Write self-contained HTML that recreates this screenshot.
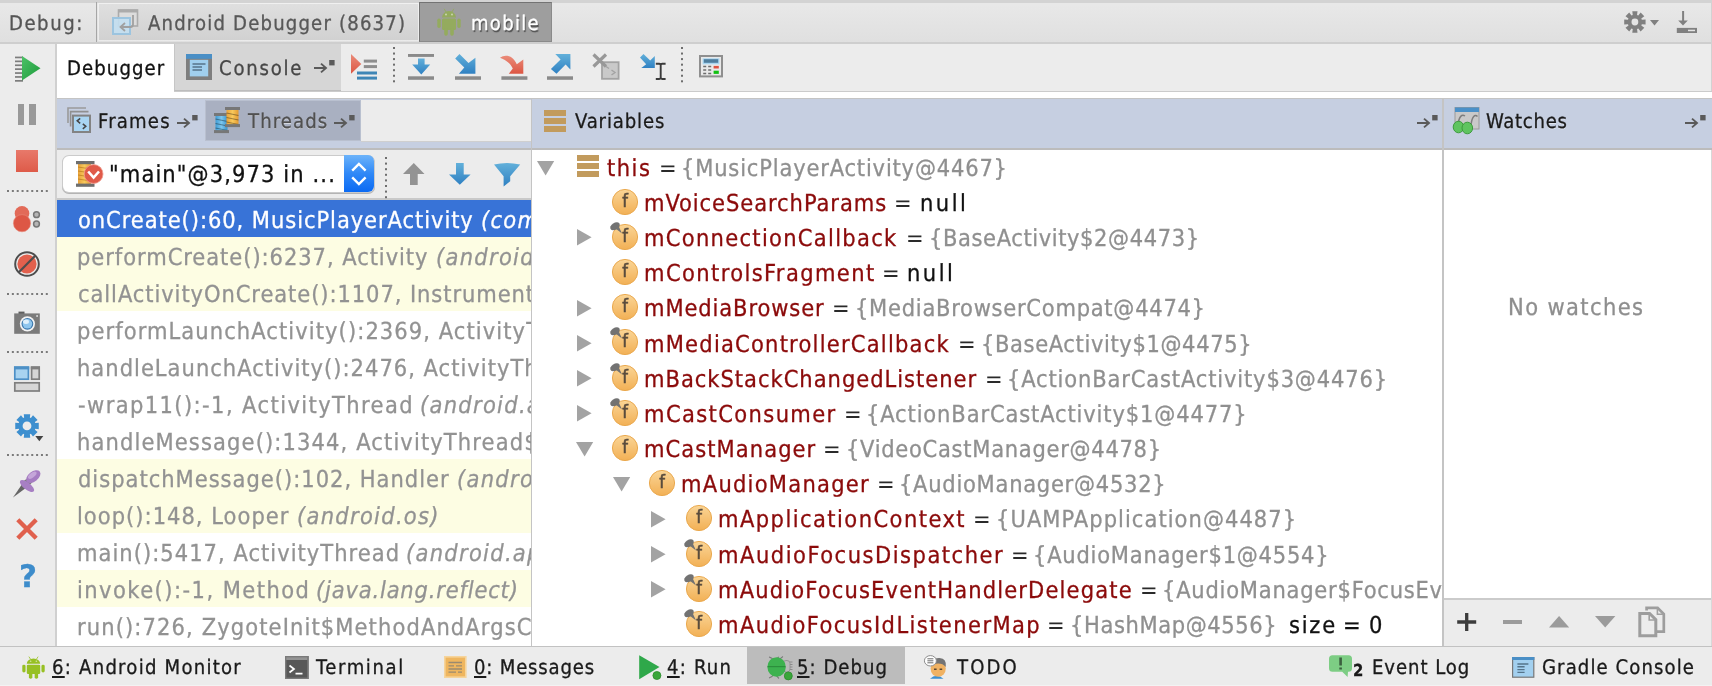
<!DOCTYPE html>
<html><head><meta charset="utf-8"><title>Debug</title>
<style>
html,body{margin:0;padding:0}
body{width:1712px;height:686px;position:relative;overflow:hidden;background:#ececec;font-family:'DejaVu Sans Condensed','DejaVu Sans','Liberation Sans',sans-serif;font-stretch:condensed}
body div,body span.t,body svg{position:absolute}
svg{overflow:visible;will-change:transform}
span.t{white-space:pre;line-height:1;font-stretch:condensed;will-change:transform;text-rendering:geometricPrecision;-webkit-text-stroke:0.3px}
.clip{overflow:hidden}
i{font-style:italic}
</style></head><body>
<svg width="0" height="0" style="left:0;top:0"><defs>
<linearGradient id="gb" x1="0" y1="0" x2="0" y2="1"><stop offset="0" stop-color="#62b0da"/><stop offset="1" stop-color="#2f80c2"/></linearGradient>
<linearGradient id="gr" x1="0" y1="0" x2="0" y2="1"><stop offset="0" stop-color="#ea8b79"/><stop offset="1" stop-color="#dc5643"/></linearGradient>
<linearGradient id="gg" x1="0" y1="0" x2="1" y2="1"><stop offset="0" stop-color="#4cc267"/><stop offset="1" stop-color="#1d9a3a"/></linearGradient>
<linearGradient id="gf" x1="0" y1="0" x2="0" y2="1"><stop offset="0" stop-color="#fad596"/><stop offset="1" stop-color="#f2b055"/></linearGradient>
<linearGradient id="go" x1="0" y1="0" x2="1" y2="0"><stop offset="0" stop-color="#e9a23a"/><stop offset="0.5" stop-color="#f8c95c"/><stop offset="1" stop-color="#e39a32"/></linearGradient>
<linearGradient id="gbl" x1="0" y1="0" x2="1" y2="0"><stop offset="0" stop-color="#3f9bd3"/><stop offset="0.5" stop-color="#7cc6ee"/><stop offset="1" stop-color="#3a93cc"/></linearGradient>
</defs></svg>

<div style="left:0px;top:0px;width:1712px;height:44px;background:linear-gradient(#e9e9e9,#dfdfdf);"></div>
<div style="left:0px;top:0px;width:1712px;height:3px;background:#d3d3d3;"></div>
<div style="left:0px;top:42.2px;width:1712px;height:1.8px;background:#cecece;"></div>
<span class="t" style="left:9.29px;top:13.20px;font-size:20.1px;letter-spacing:1.538px;color:#555;">Debug:</span>
<div style="left:95.6px;top:2.2px;width:1.3px;height:39.7px;background:#a6a6a6;"></div>
<div style="left:99px;top:3.6px;width:318.5px;height:36.1px;background:linear-gradient(#dfdfdf,#d1d1d1);box-shadow:0 0 0 1px rgba(255,255,255,.35)"></div>
<svg style="left:112px;top:9px;" width="27" height="26" viewBox="0 0 27 26" ><rect x="6.5" y="1" width="19" height="16" fill="#dcdcdc" stroke="#ababab" stroke-width="1.6"/><rect x="6.5" y="0.5" width="19" height="3" fill="#ababab"/><rect x="1" y="9" width="17" height="16" fill="#c3dff1" fill-opacity="0.9" stroke="#9cc4df" stroke-width="2"/><path d="M21 6 V15.5 Q21 18 18.5 18 H9.5 M13 14 L8.5 18 L13 22" fill="none" stroke="#a0a0a0" stroke-width="1.8"/></svg>
<span class="t" style="left:148.00px;top:13.20px;font-size:20.1px;letter-spacing:1.185px;color:#585858;">Android Debugger (8637)</span>
<div style="left:419.3px;top:1.9px;width:133.2px;height:39.7px;background:#9e9e9e;border:1.5px solid #737373;border-right-color:#8a8a8a;border-bottom-color:#8a8a8a;box-sizing:border-box"></div>
<svg style="left:436.9px;top:8.2px;" width="24.0" height="28.0" viewBox="0 0 24 28" preserveAspectRatio="none"><g fill="#94ab5e"><path d="M5 9.5 A7 6.5 0 0 1 19 9.5 Z"/><rect x="5" y="10.5" width="14" height="11.5" rx="1.5"/><rect x="0.3" y="10.5" width="3.4" height="9.5" rx="1.7"/><rect x="20.3" y="10.5" width="3.4" height="9.5" rx="1.7"/><rect x="7.2" y="20" width="3.6" height="7.7" rx="1.7"/><rect x="13.2" y="20" width="3.6" height="7.7" rx="1.7"/></g><path d="M7.2 0.8 L9 4 M16.8 0.8 L15 4" stroke="#94ab5e" stroke-width="0.9" fill="none"/><circle cx="9" cy="6.5" r="0.9" fill="#fff" fill-opacity="0.55"/><circle cx="15" cy="6.5" r="0.9" fill="#fff" fill-opacity="0.55"/></svg>
<span class="t" style="left:470.79px;top:13.20px;font-size:20.1px;letter-spacing:1.261px;color:#fff;text-shadow:1px 1.5px 1px #4c4c4c">mobile</span>
<svg style="left:1620px;top:8px;" width="42" height="30" viewBox="0 0 42 30" ><path d="M12.29 3.32 L17.51 3.32 L17.05 7.06 L18.29 7.58 L20.61 4.60 L24.30 8.29 L21.32 10.61 L21.84 11.85 L25.58 11.39 L25.58 16.61 L21.84 16.15 L21.32 17.39 L24.30 19.71 L20.61 23.40 L18.29 20.42 L17.05 20.94 L17.51 24.68 L12.29 24.68 L12.75 20.94 L11.51 20.42 L9.19 23.40 L5.50 19.71 L8.48 17.39 L7.96 16.15 L4.22 16.61 L4.22 11.39 L7.96 11.85 L8.48 10.61 L5.50 8.29 L9.19 4.60 L11.51 7.58 L12.75 7.06 Z M18.30 14.00 A3.4 3.4 0 1 0 11.50 14.00 A3.4 3.4 0 1 0 18.30 14.00 Z" fill="#808080" fill-rule="evenodd"/><path d="M30 12 H39 L34.5 17.5 Z" fill="#808080"/></svg>
<svg style="left:1675px;top:10px;" width="24" height="24" viewBox="0 0 24 24" ><rect x="7.1" y="1" width="2" height="10" fill="#808080"/><path d="M3.2 10.4 H12.8 L8 15.6 Z" fill="#808080"/><rect x="1.8" y="17.9" width="20.2" height="5.1" fill="#808080"/><rect x="13" y="19.7" width="7" height="1.5" fill="#e4e4e4"/></svg>
<div style="left:0px;top:44px;width:1712px;height:48px;background:#ececec;"></div>
<div style="left:1710.8px;top:3px;width:1.2px;height:95px;background:#d2d2d2;"></div>
<div style="left:56.5px;top:44px;width:117px;height:54px;background:#fff;"></div>
<span class="t" style="left:67.09px;top:57.70px;font-size:20.1px;letter-spacing:1.109px;color:#111;">Debugger</span>
<div style="left:173.5px;top:44px;width:167.5px;height:47.3px;background:#d6d6d6;border-left:1px solid #c6c6c6;border-bottom:1px solid #bdbdbd;box-sizing:border-box"></div>
<svg style="left:186.2px;top:53.7px;" width="26" height="26" viewBox="0 0 26 26" ><rect x="0" y="0" width="26" height="26" fill="#7e7e7e"/><rect x="0" y="0" width="26" height="4.8" fill="#4a8fc6"/><rect x="3.8" y="5.8" width="18.4" height="16.599999999999998" fill="#a0cfee"/><path d="M6.5 10 H19.5 M6.5 13 H16 M6.5 16 H16" stroke="#56748a" stroke-width="1.5"/></svg>
<span class="t" style="left:219.00px;top:57.70px;font-size:20.1px;letter-spacing:1.775px;color:#474747;">Console</span>
<svg style="left:313.7px;top:59px;" width="22" height="16" viewBox="0 0 22 16" ><path d="M0 9 H11.5 M7 4.6 L12 9 L7 13.4" fill="none" stroke="#5a5a5a" stroke-width="1.9"/><rect x="15.2" y="1" width="5.4" height="5.4" fill="#5a5a5a"/></svg>
<div style="left:173.5px;top:91px;width:1538.5px;height:1.6px;background:#cbcbcb;"></div>
<div style="left:56.5px;top:92.4px;width:1655.5px;height:5.6px;background:#fff;"></div>
<svg style="left:351px;top:54px;" width="27" height="26" viewBox="0 0 27 26" ><path d="M0 0 L10.3 10 L0 19.8 Z" fill="url(#gr)"/><rect x="12.8" y="5.6" width="13.2" height="3" fill="#8e8e8e"/><rect x="12.8" y="11.1" width="13.2" height="3" fill="#8e8e8e"/><rect x="6" y="17.5" width="20" height="3" fill="#3f86b6"/><rect x="6" y="22.6" width="20" height="3" fill="#3f86b6"/></svg>
<svg style="left:392.5px;top:47px;" width="2" height="36" viewBox="0 0 2 36" ><rect x="0" y="0.00" width="2" height="2" fill="#6e6e6e"/><rect x="0" y="5.55" width="2" height="2" fill="#6e6e6e"/><rect x="0" y="11.10" width="2" height="2" fill="#6e6e6e"/><rect x="0" y="16.65" width="2" height="2" fill="#6e6e6e"/><rect x="0" y="22.20" width="2" height="2" fill="#6e6e6e"/><rect x="0" y="27.75" width="2" height="2" fill="#6e6e6e"/><rect x="0" y="33.30" width="2" height="2" fill="#6e6e6e"/></svg>
<svg style="left:408px;top:54px;" width="26" height="26" viewBox="0 0 26 26" ><rect x="0" y="0" width="26" height="2.9" fill="#8a8a8a"/><rect x="0" y="22.3" width="26" height="3.5" fill="#8a8a8a"/><path d="M10 4.5 H16.6 V10.5 H22.2 L13.3 20.5 L4.2 10.5 H10 Z" fill="url(#gb)"/></svg>
<svg style="left:454.5px;top:54px;" width="26" height="26" viewBox="0 0 26 26" ><rect x="0" y="22.3" width="26" height="3.5" fill="#8a8a8a"/><path d="M4.5 0 L13.5 9 L20.4 3.8 V19.8 H3.9 L9.3 13.6 L0.2 4.4 Z" fill="url(#gb)"/></svg>
<svg style="left:499.5px;top:54px;" width="28" height="26" viewBox="0 0 28 26" ><rect x="1.4" y="22.3" width="26" height="3.5" fill="#8a8a8a"/><path d="M0 3.8 C5 0 13 1.2 16.8 10.2 L23.3 5.6 V19.8 H8.8 L12.8 14.6 C10.5 9.5 6.5 6.2 0 3.8 Z" fill="url(#gr)"/></svg>
<svg style="left:547px;top:54px;" width="26" height="26" viewBox="0 0 26 26" ><rect x="0" y="22.3" width="26" height="3.5" fill="#8a8a8a"/><path d="M8.3 0 H23.4 V15.6 L18.6 10.5 L9.5 19.8 L3.9 15 L13.6 5.6 Z" fill="url(#gb)"/></svg>
<svg style="left:592px;top:53px;" width="28" height="27" viewBox="0 0 28 27" ><rect x="10" y="9.2" width="16.6" height="16.6" fill="#c9c9c9" stroke="#a3a3a3" stroke-width="1.8"/><path d="M14 13.5 l3 2 M19.5 17 l3.5 2.5 l-3.5 2.5" stroke="#a3a3a3" stroke-width="1.4" fill="none"/><path d="M1.5 1.5 L14 13.5 M14 1.5 L1.5 13.5" stroke="#989898" stroke-width="3.2"/></svg>
<svg style="left:640px;top:54px;" width="27" height="26" viewBox="0 0 27 26" ><path d="M3.5 0 L10.2 6.6 L14.8 2 V14 H1.3 L6.2 10.2 L0 3.6 Z" fill="url(#gb)"/><path d="M15.8 9.7 H19.3 Q20.7 9.7 20.7 11 Q20.7 9.7 22.2 9.7 H25.6 M15.8 25 H19.3 Q20.7 25 20.7 23.6 Q20.7 25 22.2 25 H25.6 M20.7 10.5 V24.2" stroke="#3b3b3b" stroke-width="1.9" fill="none"/></svg>
<svg style="left:681.2px;top:47px;" width="2" height="36" viewBox="0 0 2 36" ><rect x="0" y="0.00" width="2" height="2" fill="#6e6e6e"/><rect x="0" y="5.55" width="2" height="2" fill="#6e6e6e"/><rect x="0" y="11.10" width="2" height="2" fill="#6e6e6e"/><rect x="0" y="16.65" width="2" height="2" fill="#6e6e6e"/><rect x="0" y="22.20" width="2" height="2" fill="#6e6e6e"/><rect x="0" y="27.75" width="2" height="2" fill="#6e6e6e"/><rect x="0" y="33.30" width="2" height="2" fill="#6e6e6e"/></svg>
<svg style="left:699px;top:54.9px;" width="24" height="22.4" viewBox="0 0 24 22.4" ><rect x="1" y="1" width="22" height="20.4" fill="#e9e9e9" stroke="#8f8f8f" stroke-width="2"/><rect x="3.6" y="3.3" width="16.8" height="6" fill="#a9d6f1"/><rect x="4.8" y="4.2" width="14.4" height="3.6" fill="#4f7e9e"/><path d="M4.2 11.5 H7.2 M9.2 11.5 H12.2 M4.2 15 H7.2 M9.2 15 H12.2 M4.2 18.5 H7.2 M9.2 18.5 H12.2" stroke="#6d6d6d" stroke-width="1.6"/><rect x="14.6" y="10.9" width="5.2" height="2.6" fill="#df5140"/><rect x="14.6" y="15.7" width="5.2" height="3.2" fill="#12c112"/></svg>
<div style="left:56.5px;top:98px;width:1655.5px;height:1.4px;background:#c4c4c4;"></div>
<div style="left:56.5px;top:99.4px;width:1655.5px;height:48.6px;background:#c6cfe1;"></div>
<div style="left:361px;top:100.2px;width:169.5px;height:40.4px;background:#ececec;border-bottom:1px solid #cfcfcf"></div>
<div style="left:204.5px;top:100.2px;width:156px;height:40.4px;background:#a9b0c1;border:1px solid #b9c0cf;box-sizing:border-box"></div>
<div style="left:56.5px;top:148px;width:1655.5px;height:1.6px;background:#bcbcbc;"></div>
<svg style="left:67px;top:107px;" width="24" height="26" viewBox="0 0 24 26" ><path d="M1 16 V1 H19" fill="none" stroke="#9a9a9a" stroke-width="1.6"/><path d="M3.6 19.5 V4.6 H21.5" fill="none" stroke="#909090" stroke-width="1.6"/><rect x="6" y="8.6" width="17" height="16.4" fill="#a9d5f2" stroke="#838383" stroke-width="2"/><path d="M13.2 11.3 L10.2 13.8 L13.2 16.3 M15.8 16.8 L18.8 19.3 L15.8 21.8" fill="none" stroke="#454545" stroke-width="1.5"/></svg>
<span class="t" style="left:98.29px;top:110.80px;font-size:20.1px;letter-spacing:1.197px;color:#1a1a1a;text-shadow:0 1px 0 rgba(255,255,255,.45)">Frames</span>
<svg style="left:177px;top:113.8px;" width="22" height="16" viewBox="0 0 22 16" ><path d="M0 9 H11.5 M7 4.6 L12 9 L7 13.4" fill="none" stroke="#5a5a5a" stroke-width="1.9"/><rect x="15.2" y="1" width="5.4" height="5.4" fill="#5a5a5a"/></svg>
<svg style="left:214px;top:107px;" width="27" height="27" viewBox="0 0 27 27" ><rect x="1.5" y="8" width="12" height="16.1" fill="url(#gbl)"/><path d="M1.5 12 l12 2.5 M1.5 16.5 l12 2.5 M1.5 21 l12 2.5" stroke="#000" stroke-opacity="0.35" stroke-width="1.2"/><rect x="0" y="6" width="15" height="3" fill="#777"/><rect x="0" y="23.1" width="15" height="3" fill="#777"/><rect x="12.5" y="2" width="12" height="16.1" fill="url(#go)"/><path d="M12.5 6 l12 2.5 M12.5 10.5 l12 2.5 M12.5 15 l12 2.5" stroke="#000" stroke-opacity="0.35" stroke-width="1.2"/><rect x="11" y="0" width="15" height="3" fill="#777"/><rect x="11" y="17.1" width="15" height="3" fill="#777"/></svg>
<span class="t" style="left:247.60px;top:110.80px;font-size:20.1px;letter-spacing:1.107px;color:#505050;text-shadow:0 1px 0 rgba(255,255,255,.5)">Threads</span>
<svg style="left:334.3px;top:113.8px;" width="22" height="16" viewBox="0 0 22 16" ><path d="M0 9 H11.5 M7 4.6 L12 9 L7 13.4" fill="none" stroke="#5a5a5a" stroke-width="1.9"/><rect x="15.2" y="1" width="5.4" height="5.4" fill="#5a5a5a"/></svg>
<div style="left:543.5px;top:109.5px;width:22px;height:6px;background:#c29b5d;"></div>
<div style="left:543.5px;top:117.5px;width:22px;height:6px;background:#c29b5d;"></div>
<div style="left:543.5px;top:125.5px;width:22px;height:6px;background:#c29b5d;"></div>
<span class="t" style="left:575.00px;top:110.80px;font-size:20.1px;letter-spacing:0.862px;color:#1a1a1a;text-shadow:0 1px 0 rgba(255,255,255,.45)">Variables</span>
<svg style="left:1416.5px;top:113.8px;" width="22" height="16" viewBox="0 0 22 16" ><path d="M0 9 H11.5 M7 4.6 L12 9 L7 13.4" fill="none" stroke="#5a5a5a" stroke-width="1.9"/><rect x="15.2" y="1" width="5.4" height="5.4" fill="#5a5a5a"/></svg>
<svg style="left:1453px;top:107px;" width="27" height="27" viewBox="0 0 27 27" ><rect x="2" y="0.5" width="24" height="21.5" fill="#c9c9c9" stroke="#9a9a9a" stroke-width="1"/><rect x="2" y="0.5" width="24" height="4.5" fill="#4a90c8"/><path d="M5 18 C6 9 9 7 12 9 M18 18 C19 9 22 7 24.5 9.5" fill="none" stroke="#7d7d7d" stroke-width="1.5"/><ellipse cx="5.5" cy="20" rx="5.3" ry="5.8" fill="#5fc45f" stroke="#3c9a3c" stroke-width="1"/><ellipse cx="14.3" cy="21" rx="5.3" ry="5.8" fill="#5fc45f" stroke="#3c9a3c" stroke-width="1"/></svg>
<span class="t" style="left:1486.40px;top:110.80px;font-size:20.1px;letter-spacing:0.704px;color:#1a1a1a;text-shadow:0 1px 0 rgba(255,255,255,.45)">Watches</span>
<svg style="left:1684.5px;top:113.8px;" width="22" height="16" viewBox="0 0 22 16" ><path d="M0 9 H11.5 M7 4.6 L12 9 L7 13.4" fill="none" stroke="#5a5a5a" stroke-width="1.9"/><rect x="15.2" y="1" width="5.4" height="5.4" fill="#5a5a5a"/></svg>
<div style="left:0px;top:44px;width:55px;height:602px;background:#ececec;"></div>
<div style="left:55px;top:44px;width:1.5px;height:602px;background:#d0d0d0;"></div>
<svg style="left:14px;top:56px;" width="28" height="25" viewBox="0 0 28 25" ><rect x="1" y="0.6" width="8" height="1.7" fill="#7d7d7d"/><rect x="1" y="4.5" width="8" height="1.7" fill="#7d7d7d"/><rect x="1" y="8.4" width="8" height="1.7" fill="#7d7d7d"/><rect x="1" y="12.3" width="8" height="1.7" fill="#7d7d7d"/><rect x="1" y="16.2" width="8" height="1.7" fill="#7d7d7d"/><rect x="1" y="20.1" width="8" height="1.7" fill="#7d7d7d"/><rect x="1" y="24.0" width="8" height="1.7" fill="#7d7d7d"/><path d="M8 0 L26.5 12.2 L8 24.5 Z" fill="url(#gg)"/></svg>
<div style="left:18px;top:104px;width:5.8px;height:21px;background:#999;"></div>
<div style="left:29px;top:104px;width:7px;height:21px;background:#999;"></div>
<div style="left:16.2px;top:149.7px;width:21.8px;height:22.3px;background:linear-gradient(#e8796a,#de5b49);"></div>
<svg style="left:7.3px;top:189.6px;" width="41" height="2" viewBox="0 0 41 2" ><rect x="0.00" y="0" width="2" height="2" fill="#7a7a7a"/><rect x="4.85" y="0" width="2" height="2" fill="#7a7a7a"/><rect x="9.70" y="0" width="2" height="2" fill="#7a7a7a"/><rect x="14.55" y="0" width="2" height="2" fill="#7a7a7a"/><rect x="19.40" y="0" width="2" height="2" fill="#7a7a7a"/><rect x="24.25" y="0" width="2" height="2" fill="#7a7a7a"/><rect x="29.10" y="0" width="2" height="2" fill="#7a7a7a"/><rect x="33.95" y="0" width="2" height="2" fill="#7a7a7a"/><rect x="38.80" y="0" width="2" height="2" fill="#7a7a7a"/></svg>
<svg style="left:12px;top:204px;" width="30" height="30" viewBox="0 0 30 30" ><circle cx="10" cy="9.4" r="7.3" fill="#e26a58"/><circle cx="10" cy="19.2" r="8.6" fill="#dd5745" stroke="#e88a7b" stroke-width="0.6"/><circle cx="24.5" cy="10.7" r="2.9" fill="#b5b5b5" stroke="#777" stroke-width="1.5"/><circle cx="24.5" cy="20" r="2.9" fill="#b5b5b5" stroke="#777" stroke-width="1.5"/></svg>
<svg style="left:13px;top:250.3px;" width="28" height="28" viewBox="0 0 28 28" ><circle cx="14" cy="14" r="9.6" fill="#e2604d"/><circle cx="14" cy="14" r="11.8" fill="none" stroke="#4d4d4d" stroke-width="2"/><path d="M5.8 22.2 L22.2 5.8" stroke="#4d4d4d" stroke-width="2.2"/></svg>
<svg style="left:7.3px;top:293px;" width="41" height="2" viewBox="0 0 41 2" ><rect x="0.00" y="0" width="2" height="2" fill="#7a7a7a"/><rect x="4.85" y="0" width="2" height="2" fill="#7a7a7a"/><rect x="9.70" y="0" width="2" height="2" fill="#7a7a7a"/><rect x="14.55" y="0" width="2" height="2" fill="#7a7a7a"/><rect x="19.40" y="0" width="2" height="2" fill="#7a7a7a"/><rect x="24.25" y="0" width="2" height="2" fill="#7a7a7a"/><rect x="29.10" y="0" width="2" height="2" fill="#7a7a7a"/><rect x="33.95" y="0" width="2" height="2" fill="#7a7a7a"/><rect x="38.80" y="0" width="2" height="2" fill="#7a7a7a"/></svg>
<svg style="left:14px;top:311px;" width="26" height="23" viewBox="0 0 26 23" ><rect x="0.2" y="2.4" width="25.6" height="20.4" fill="#7b7b7b"/><rect x="4.5" y="0.6" width="6" height="2.2" fill="#5f5f5f"/><circle cx="13.4" cy="12.8" r="7.6" fill="#f3f3f3"/><circle cx="13.4" cy="12.8" r="5.9" fill="#3c78ad"/><circle cx="13.4" cy="12.8" r="4.8" fill="#8fc6ee"/><ellipse cx="12" cy="10.8" rx="3" ry="2.2" fill="#dff0fb"/><rect x="22.3" y="4.2" width="1.6" height="1.6" fill="#e8e8e8"/></svg>
<svg style="left:7.3px;top:350.7px;" width="41" height="2" viewBox="0 0 41 2" ><rect x="0.00" y="0" width="2" height="2" fill="#7a7a7a"/><rect x="4.85" y="0" width="2" height="2" fill="#7a7a7a"/><rect x="9.70" y="0" width="2" height="2" fill="#7a7a7a"/><rect x="14.55" y="0" width="2" height="2" fill="#7a7a7a"/><rect x="19.40" y="0" width="2" height="2" fill="#7a7a7a"/><rect x="24.25" y="0" width="2" height="2" fill="#7a7a7a"/><rect x="29.10" y="0" width="2" height="2" fill="#7a7a7a"/><rect x="33.95" y="0" width="2" height="2" fill="#7a7a7a"/><rect x="38.80" y="0" width="2" height="2" fill="#7a7a7a"/></svg>
<svg style="left:14px;top:366px;" width="26" height="26" viewBox="0 0 26 26" ><rect x="0.8" y="1.2" width="13.6" height="12" fill="#a8d3f0" stroke="#4d90c6" stroke-width="1.7"/><rect x="0" y="0.4" width="15.2" height="3" fill="#4d90c6"/><rect x="17.6" y="1.2" width="7.6" height="12" fill="#d6d6d6" stroke="#7f7f7f" stroke-width="1.7"/><rect x="16.8" y="0.4" width="9.2" height="3" fill="#7f7f7f"/><rect x="0.8" y="16.8" width="24.4" height="8.2" fill="#d6d6d6" stroke="#7f7f7f" stroke-width="1.7"/></svg>
<svg style="left:13px;top:412px;" width="32" height="32" viewBox="0 0 32 32" ><path d="M10.75 2.14 L17.25 2.14 L16.85 5.59 L17.86 6.01 L20.01 3.28 L24.62 7.89 L21.89 10.04 L22.31 11.05 L25.76 10.65 L25.76 17.15 L22.31 16.75 L21.89 17.76 L24.62 19.91 L20.01 24.52 L17.86 21.79 L16.85 22.21 L17.25 25.66 L10.75 25.66 L11.15 22.21 L10.14 21.79 L7.99 24.52 L3.38 19.91 L6.11 17.76 L5.69 16.75 L2.24 17.15 L2.24 10.65 L5.69 11.05 L6.11 10.04 L3.38 7.89 L7.99 3.28 L10.14 6.01 L11.15 5.59 Z M18.40 13.90 A4.4 4.4 0 1 0 9.60 13.90 A4.4 4.4 0 1 0 18.40 13.90 Z" fill="#3d8fcf" fill-rule="evenodd"/><path d="M22.3 24 H30.3 L26.3 29.2 Z" fill="#444"/></svg>
<svg style="left:7.3px;top:454.3px;" width="41" height="2" viewBox="0 0 41 2" ><rect x="0.00" y="0" width="2" height="2" fill="#7a7a7a"/><rect x="4.85" y="0" width="2" height="2" fill="#7a7a7a"/><rect x="9.70" y="0" width="2" height="2" fill="#7a7a7a"/><rect x="14.55" y="0" width="2" height="2" fill="#7a7a7a"/><rect x="19.40" y="0" width="2" height="2" fill="#7a7a7a"/><rect x="24.25" y="0" width="2" height="2" fill="#7a7a7a"/><rect x="29.10" y="0" width="2" height="2" fill="#7a7a7a"/><rect x="33.95" y="0" width="2" height="2" fill="#7a7a7a"/><rect x="38.80" y="0" width="2" height="2" fill="#7a7a7a"/></svg>
<svg style="left:12px;top:469px;" width="30" height="30" viewBox="0 0 30 30" ><path d="M1 28.5 L10.5 14.5 L14.5 18.5 Z" fill="#666"/><path d="M10 13 L17.5 8 L21 12.5 L15 19 Z" fill="#7c7c7c"/><ellipse cx="15" cy="17" rx="8.6" ry="3.6" transform="rotate(38 15 17)" fill="#a77fc3"/><ellipse cx="21.3" cy="7.6" rx="8.2" ry="5" transform="rotate(-38 21.3 7.6)" fill="#a67dc2"/><ellipse cx="20.3" cy="6.2" rx="5" ry="2.4" transform="rotate(-38 20.3 6.2)" fill="#c5a6d9"/></svg>
<svg style="left:16px;top:518.4px;" width="22" height="22" viewBox="0 0 22 22" ><path d="M1.8 1.8 L20.2 20.2 M20.2 1.8 L1.8 20.2" stroke="#e0604d" stroke-width="4.4"/></svg>
<span class="t" style="left:18.6px;top:561.97px;font-size:31px;color:#3d8ccb;font-weight:bold;font-family:'DejaVu Sans','Liberation Sans',sans-serif;font-stretch:normal">?</span>
<div style="left:56.5px;top:149.6px;width:474px;height:50px;background:#ececec;"></div>
<div style="left:56.5px;top:198.4px;width:474px;height:1.6px;background:#c9c9c9;"></div>
<div style="left:530.5px;top:99.4px;width:1.7px;height:546.6px;background:#c4c4c4;"></div>
<div style="left:62.6px;top:155.5px;width:311.4px;height:36.3px;background:#fff;border-radius:6px;box-shadow:0 0 0 1px #cbcbcb,0 1px 0 1px #b4b4b4"></div>
<div style="left:344px;top:155.2px;width:30.2px;height:36.8px;background:linear-gradient(#6cb3fa,#2f88f7 50%,#0b6af3);border-radius:0 6px 6px 0"></div>
<svg style="left:344px;top:155px;" width="30" height="37" viewBox="0 0 30 37" ><path d="M8.2 15.6 L14.9 9 L21.6 15.6 M8.2 22.3 L14.9 29 L21.6 22.3" fill="none" stroke="#fff" stroke-width="2.4"/></svg>
<svg style="left:76px;top:161px;" width="28" height="26" viewBox="0 0 28 26" ><rect x="2" y="2" width="13" height="22" fill="url(#go)"/><path d="M2 6 l13 2 M2 10 l13 2 M2 14 l13 2 M2 18 l13 2" stroke="#a86a10" stroke-opacity="0.55" stroke-width="1"/><rect x="0" y="0" width="18.5" height="3.2" fill="#6e6e6e"/><rect x="0" y="22.6" width="18.5" height="3.2" fill="#6e6e6e"/><circle cx="17.6" cy="13" r="9.4" fill="#e05a49" stroke="#ef9c8f" stroke-width="0.8"/><path d="M12.2 10.5 L17.6 16.6 L23 10.5" fill="none" stroke="#fff" stroke-width="2.6"/></svg>
<span class="t" style="left:108.76px;top:163.40px;font-size:23.4px;letter-spacing:1.113px;color:#111;">&quot;main&quot;@3,973 in ...</span>
<svg style="left:385px;top:156.5px;" width="2" height="42" viewBox="0 0 2 42" ><rect x="0" y="0.00" width="2" height="2" fill="#6e6e6e"/><rect x="0" y="5.60" width="2" height="2" fill="#6e6e6e"/><rect x="0" y="11.20" width="2" height="2" fill="#6e6e6e"/><rect x="0" y="16.80" width="2" height="2" fill="#6e6e6e"/><rect x="0" y="22.40" width="2" height="2" fill="#6e6e6e"/><rect x="0" y="28.00" width="2" height="2" fill="#6e6e6e"/><rect x="0" y="33.60" width="2" height="2" fill="#6e6e6e"/><rect x="0" y="39.20" width="2" height="2" fill="#6e6e6e"/></svg>
<svg style="left:403px;top:163px;" width="22" height="22" viewBox="0 0 22 22" ><path d="M10.8 0 L21.5 11 H14.7 V22 H7 V11 H0 Z" fill="#939393"/></svg>
<svg style="left:449px;top:163px;" width="22" height="22" viewBox="0 0 22 22" ><path d="M7 0 H14.7 V11.6 H21.6 L10.8 21.8 L0 11.6 H7 Z" fill="url(#gb)"/></svg>
<svg style="left:493.5px;top:163px;" width="27" height="24" viewBox="0 0 27 24" ><path d="M0 1.6 Q13 -1.6 26.2 1.6 L16.2 13.2 V18.2 L9.6 23.6 V13.2 Z" fill="url(#gb)"/></svg>
<div class="clip" style="left:56.5px;top:200px;width:474px;height:446px;background:#fff">
<div style="left:0px;top:0px;width:474px;height:37px;background:#3873d7;"></div>
<span class="t" style="left:21.13px;top:8.60px;font-size:23.4px;letter-spacing:0.942px;color:#fff;">onCreate():60, MusicPlayerActivity</span>
<span class="t" style="left:424.76px;top:8.60px;font-size:23.4px;letter-spacing:1.295px;color:#fff;font-style:italic;">(com.example.android.uamp.ui)</span>
<div style="left:0px;top:36.6px;width:474px;height:37px;background:#fdfde3;"></div>
<span class="t" style="left:20.43px;top:45.60px;font-size:23.4px;letter-spacing:0.952px;color:#929292;">performCreate():6237, Activity</span>
<span class="t" style="left:379.46px;top:45.60px;font-size:23.4px;letter-spacing:1.295px;color:#929292;font-style:italic;">(android.app)</span>
<div style="left:0px;top:73.6px;width:474px;height:37px;background:#fdfde3;"></div>
<span class="t" style="left:21.13px;top:82.60px;font-size:23.4px;letter-spacing:0.929px;color:#929292;">callActivityOnCreate():1107, Instrumentation <i>(android.app)</i></span>
<div style="left:0px;top:110.6px;width:474px;height:37px;background:#fff;"></div>
<span class="t" style="left:20.43px;top:119.60px;font-size:23.4px;letter-spacing:1.086px;color:#929292;">performLaunchActivity():2369, ActivityThread <i>(android.app)</i></span>
<div style="left:0px;top:147.6px;width:474px;height:37px;background:#fff;"></div>
<span class="t" style="left:20.43px;top:156.60px;font-size:23.4px;letter-spacing:1.021px;color:#929292;">handleLaunchActivity():2476, ActivityThread <i>(android.app)</i></span>
<div style="left:0px;top:184.6px;width:474px;height:37px;background:#fff;"></div>
<span class="t" style="left:21.36px;top:193.60px;font-size:23.4px;letter-spacing:1.412px;color:#929292;">-wrap11():-1, ActivityThread</span>
<span class="t" style="left:363.66px;top:193.60px;font-size:23.4px;letter-spacing:1.295px;color:#929292;font-style:italic;">(android.app)</span>
<div style="left:0px;top:221.6px;width:474px;height:37px;background:#fff;"></div>
<span class="t" style="left:20.43px;top:230.60px;font-size:23.4px;letter-spacing:1.127px;color:#929292;">handleMessage():1344, ActivityThread$H <i>(android.app)</i></span>
<div style="left:0px;top:258.6px;width:474px;height:37px;background:#fdfde3;"></div>
<span class="t" style="left:21.13px;top:267.60px;font-size:23.4px;letter-spacing:0.996px;color:#929292;">dispatchMessage():102, Handler</span>
<span class="t" style="left:400.76px;top:267.60px;font-size:23.4px;letter-spacing:1.295px;color:#929292;font-style:italic;">(android.os)</span>
<div style="left:0px;top:295.6px;width:474px;height:37px;background:#fdfde3;"></div>
<span class="t" style="left:20.31px;top:304.60px;font-size:23.4px;letter-spacing:1.023px;color:#929292;">loop():148, Looper</span>
<span class="t" style="left:240.96px;top:304.60px;font-size:23.4px;letter-spacing:1.295px;color:#929292;font-style:italic;">(android.os)</span>
<div style="left:0px;top:332.6px;width:474px;height:37px;background:#fff;"></div>
<span class="t" style="left:20.43px;top:341.60px;font-size:23.4px;letter-spacing:1.032px;color:#929292;">main():5417, ActivityThread</span>
<span class="t" style="left:349.86px;top:341.60px;font-size:23.4px;letter-spacing:1.295px;color:#929292;font-style:italic;">(android.app)</span>
<div style="left:0px;top:369.6px;width:474px;height:37px;background:#fdfde3;"></div>
<span class="t" style="left:20.31px;top:378.60px;font-size:23.4px;letter-spacing:1.465px;color:#929292;">invoke():-1, Method</span>
<span class="t" style="left:259.66px;top:378.60px;font-size:23.4px;letter-spacing:0.829px;color:#929292;font-style:italic;">(java.lang.reflect)</span>
<div style="left:0px;top:406.6px;width:474px;height:37px;background:#fff;"></div>
<span class="t" style="left:20.43px;top:415.60px;font-size:23.4px;letter-spacing:1.117px;color:#929292;">run():726, ZygoteInit$MethodAndArgsCaller <i>(com.android.internal.os)</i></span>
</div>
<div style="left:532.2px;top:149.6px;width:910px;height:496.4px;background:#fff;"></div>
<div style="left:1442.2px;top:99.4px;width:1.7px;height:546.6px;background:#c4c4c4;"></div>
<div class="clip" style="left:532.2px;top:149.6px;width:910px;height:496.4px">
<svg style="left:5.199999999999977px;top:11.100000000000005px;" width="18" height="15" viewBox="0 0 18 15" ><path d="M0 0 H17.2 L8.6 14.6 Z" fill="#a3a3a3"/></svg>
<div style="left:44.5px;top:5.800000000000006px;width:22.3px;height:6px;background:#c29b5d;"></div>
<div style="left:44.5px;top:13.800000000000006px;width:22.3px;height:6px;background:#c29b5d;"></div>
<div style="left:44.5px;top:21.800000000000004px;width:22.3px;height:6px;background:#c29b5d;"></div>
<span class="t" style="left:74.92px;top:7.00px;font-size:23.4px;letter-spacing:1.482px;color:#8b0a0a;">this</span>
<span class="t" style="left:127.08px;top:7.00px;font-size:23.4px;letter-spacing:0.000px;color:#2a2a2a;-webkit-text-stroke:0">=</span>
<span class="t" style="left:149.23px;top:7.00px;font-size:23.4px;letter-spacing:0.826px;color:#8f8f8f;">{MusicPlayerActivity@4467}</span>
<svg style="left:76.59999999999991px;top:36.09px;" width="32" height="32" viewBox="0 0 32 32" ><circle cx="16" cy="16" r="12.6" fill="url(#gf)" stroke="#eaa94f" stroke-width="1"/><text x="16.2" y="21.4" font-size="18" text-anchor="middle" fill="#5a4c3d" stroke="#5a4c3d" stroke-width="0.55" font-family="DejaVu Sans,Liberation Sans,sans-serif">f</text></svg>
<span class="t" style="left:111.53px;top:42.19px;font-size:23.4px;letter-spacing:0.944px;color:#8b0a0a;">mVoiceSearchParams</span>
<span class="t" style="left:362.08px;top:42.19px;font-size:23.4px;letter-spacing:0.000px;color:#2a2a2a;-webkit-text-stroke:0">=</span>
<span class="t" style="left:387.93px;top:42.19px;font-size:23.4px;letter-spacing:2.495px;color:#111;">null</span>
<svg style="left:44.799999999999955px;top:79.88px;" width="15" height="17" viewBox="0 0 15 17" ><path d="M0 0 L14.6 8.3 L0 16.6 Z" fill="#a3a3a3"/></svg>
<svg style="left:76.59999999999991px;top:71.28px;" width="32" height="32" viewBox="0 0 32 32" ><circle cx="16" cy="16" r="12.6" fill="url(#gf)" stroke="#eaa94f" stroke-width="1"/><text x="16.2" y="21.4" font-size="18" text-anchor="middle" fill="#5a4c3d" stroke="#5a4c3d" stroke-width="0.55" font-family="DejaVu Sans,Liberation Sans,sans-serif">f</text><ellipse cx="6" cy="5.3" rx="5.2" ry="3.4" transform="rotate(-32 6 5.3)" fill="#727272"/><path d="M6.5 7.5 L13 12.5 L9.8 5.6 Z" fill="#727272"/></svg>
<span class="t" style="left:111.53px;top:77.38px;font-size:23.4px;letter-spacing:1.295px;color:#8b0a0a;">mConnectionCallback</span>
<span class="t" style="left:373.58px;top:77.38px;font-size:23.4px;letter-spacing:0.000px;color:#2a2a2a;-webkit-text-stroke:0">=</span>
<span class="t" style="left:396.73px;top:77.38px;font-size:23.4px;letter-spacing:0.602px;color:#8f8f8f;">{BaseActivity$2@4473}</span>
<svg style="left:76.59999999999991px;top:106.47px;" width="32" height="32" viewBox="0 0 32 32" ><circle cx="16" cy="16" r="12.6" fill="url(#gf)" stroke="#eaa94f" stroke-width="1"/><text x="16.2" y="21.4" font-size="18" text-anchor="middle" fill="#5a4c3d" stroke="#5a4c3d" stroke-width="0.55" font-family="DejaVu Sans,Liberation Sans,sans-serif">f</text></svg>
<span class="t" style="left:111.53px;top:112.57px;font-size:23.4px;letter-spacing:1.396px;color:#8b0a0a;">mControlsFragment</span>
<span class="t" style="left:350.08px;top:112.57px;font-size:23.4px;letter-spacing:0.000px;color:#2a2a2a;-webkit-text-stroke:0">=</span>
<span class="t" style="left:374.93px;top:112.57px;font-size:23.4px;letter-spacing:2.495px;color:#111;">null</span>
<svg style="left:44.799999999999955px;top:150.26px;" width="15" height="17" viewBox="0 0 15 17" ><path d="M0 0 L14.6 8.3 L0 16.6 Z" fill="#a3a3a3"/></svg>
<svg style="left:76.59999999999991px;top:141.66px;" width="32" height="32" viewBox="0 0 32 32" ><circle cx="16" cy="16" r="12.6" fill="url(#gf)" stroke="#eaa94f" stroke-width="1"/><text x="16.2" y="21.4" font-size="18" text-anchor="middle" fill="#5a4c3d" stroke="#5a4c3d" stroke-width="0.55" font-family="DejaVu Sans,Liberation Sans,sans-serif">f</text></svg>
<span class="t" style="left:111.53px;top:147.76px;font-size:23.4px;letter-spacing:0.892px;color:#8b0a0a;">mMediaBrowser</span>
<span class="t" style="left:300.08px;top:147.76px;font-size:23.4px;letter-spacing:0.000px;color:#2a2a2a;-webkit-text-stroke:0">=</span>
<span class="t" style="left:322.73px;top:147.76px;font-size:23.4px;letter-spacing:0.735px;color:#8f8f8f;">{MediaBrowserCompat@4474}</span>
<svg style="left:44.799999999999955px;top:185.45px;" width="15" height="17" viewBox="0 0 15 17" ><path d="M0 0 L14.6 8.3 L0 16.6 Z" fill="#a3a3a3"/></svg>
<svg style="left:76.59999999999991px;top:176.85px;" width="32" height="32" viewBox="0 0 32 32" ><circle cx="16" cy="16" r="12.6" fill="url(#gf)" stroke="#eaa94f" stroke-width="1"/><text x="16.2" y="21.4" font-size="18" text-anchor="middle" fill="#5a4c3d" stroke="#5a4c3d" stroke-width="0.55" font-family="DejaVu Sans,Liberation Sans,sans-serif">f</text><ellipse cx="6" cy="5.3" rx="5.2" ry="3.4" transform="rotate(-32 6 5.3)" fill="#727272"/><path d="M6.5 7.5 L13 12.5 L9.8 5.6 Z" fill="#727272"/></svg>
<span class="t" style="left:111.53px;top:182.95px;font-size:23.4px;letter-spacing:1.225px;color:#8b0a0a;">mMediaControllerCallback</span>
<span class="t" style="left:426.08px;top:182.95px;font-size:23.4px;letter-spacing:0.000px;color:#2a2a2a;-webkit-text-stroke:0">=</span>
<span class="t" style="left:448.73px;top:182.95px;font-size:23.4px;letter-spacing:0.627px;color:#8f8f8f;">{BaseActivity$1@4475}</span>
<svg style="left:44.799999999999955px;top:220.64px;" width="15" height="17" viewBox="0 0 15 17" ><path d="M0 0 L14.6 8.3 L0 16.6 Z" fill="#a3a3a3"/></svg>
<svg style="left:76.59999999999991px;top:212.04px;" width="32" height="32" viewBox="0 0 32 32" ><circle cx="16" cy="16" r="12.6" fill="url(#gf)" stroke="#eaa94f" stroke-width="1"/><text x="16.2" y="21.4" font-size="18" text-anchor="middle" fill="#5a4c3d" stroke="#5a4c3d" stroke-width="0.55" font-family="DejaVu Sans,Liberation Sans,sans-serif">f</text><ellipse cx="6" cy="5.3" rx="5.2" ry="3.4" transform="rotate(-32 6 5.3)" fill="#727272"/><path d="M6.5 7.5 L13 12.5 L9.8 5.6 Z" fill="#727272"/></svg>
<span class="t" style="left:111.53px;top:218.14px;font-size:23.4px;letter-spacing:0.984px;color:#8b0a0a;">mBackStackChangedListener</span>
<span class="t" style="left:452.58px;top:218.14px;font-size:23.4px;letter-spacing:0.000px;color:#2a2a2a;-webkit-text-stroke:0">=</span>
<span class="t" style="left:475.23px;top:218.14px;font-size:23.4px;letter-spacing:0.852px;color:#8f8f8f;">{ActionBarCastActivity$3@4476}</span>
<svg style="left:44.799999999999955px;top:255.83px;" width="15" height="17" viewBox="0 0 15 17" ><path d="M0 0 L14.6 8.3 L0 16.6 Z" fill="#a3a3a3"/></svg>
<svg style="left:76.59999999999991px;top:247.23000000000002px;" width="32" height="32" viewBox="0 0 32 32" ><circle cx="16" cy="16" r="12.6" fill="url(#gf)" stroke="#eaa94f" stroke-width="1"/><text x="16.2" y="21.4" font-size="18" text-anchor="middle" fill="#5a4c3d" stroke="#5a4c3d" stroke-width="0.55" font-family="DejaVu Sans,Liberation Sans,sans-serif">f</text><ellipse cx="6" cy="5.3" rx="5.2" ry="3.4" transform="rotate(-32 6 5.3)" fill="#727272"/><path d="M6.5 7.5 L13 12.5 L9.8 5.6 Z" fill="#727272"/></svg>
<span class="t" style="left:111.53px;top:253.33px;font-size:23.4px;letter-spacing:1.383px;color:#8b0a0a;">mCastConsumer</span>
<span class="t" style="left:312.08px;top:253.33px;font-size:23.4px;letter-spacing:0.000px;color:#2a2a2a;-webkit-text-stroke:0">=</span>
<span class="t" style="left:333.73px;top:253.33px;font-size:23.4px;letter-spacing:0.869px;color:#8f8f8f;">{ActionBarCastActivity$1@4477}</span>
<svg style="left:43.399999999999956px;top:292.61999999999995px;" width="18" height="15" viewBox="0 0 18 15" ><path d="M0 0 H17.2 L8.6 14.6 Z" fill="#a3a3a3"/></svg>
<svg style="left:76.59999999999991px;top:282.41999999999996px;" width="32" height="32" viewBox="0 0 32 32" ><circle cx="16" cy="16" r="12.6" fill="url(#gf)" stroke="#eaa94f" stroke-width="1"/><text x="16.2" y="21.4" font-size="18" text-anchor="middle" fill="#5a4c3d" stroke="#5a4c3d" stroke-width="0.55" font-family="DejaVu Sans,Liberation Sans,sans-serif">f</text></svg>
<span class="t" style="left:111.53px;top:288.52px;font-size:23.4px;letter-spacing:1.062px;color:#8b0a0a;">mCastManager</span>
<span class="t" style="left:291.08px;top:288.52px;font-size:23.4px;letter-spacing:0.000px;color:#2a2a2a;-webkit-text-stroke:0">=</span>
<span class="t" style="left:313.73px;top:288.52px;font-size:23.4px;letter-spacing:0.716px;color:#8f8f8f;">{VideoCastManager@4478}</span>
<svg style="left:80.39999999999995px;top:327.81px;" width="18" height="15" viewBox="0 0 18 15" ><path d="M0 0 H17.2 L8.6 14.6 Z" fill="#a3a3a3"/></svg>
<svg style="left:113.59999999999991px;top:317.61px;" width="32" height="32" viewBox="0 0 32 32" ><circle cx="16" cy="16" r="12.6" fill="url(#gf)" stroke="#eaa94f" stroke-width="1"/><text x="16.2" y="21.4" font-size="18" text-anchor="middle" fill="#5a4c3d" stroke="#5a4c3d" stroke-width="0.55" font-family="DejaVu Sans,Liberation Sans,sans-serif">f</text></svg>
<span class="t" style="left:148.53px;top:323.71px;font-size:23.4px;letter-spacing:1.257px;color:#8b0a0a;">mAudioManager</span>
<span class="t" style="left:345.08px;top:323.71px;font-size:23.4px;letter-spacing:0.000px;color:#2a2a2a;-webkit-text-stroke:0">=</span>
<span class="t" style="left:367.23px;top:323.71px;font-size:23.4px;letter-spacing:0.735px;color:#8f8f8f;">{AudioManager@4532}</span>
<svg style="left:118.79999999999995px;top:361.4px;" width="15" height="17" viewBox="0 0 15 17" ><path d="M0 0 L14.6 8.3 L0 16.6 Z" fill="#a3a3a3"/></svg>
<svg style="left:150.5999999999999px;top:352.79999999999995px;" width="32" height="32" viewBox="0 0 32 32" ><circle cx="16" cy="16" r="12.6" fill="url(#gf)" stroke="#eaa94f" stroke-width="1"/><text x="16.2" y="21.4" font-size="18" text-anchor="middle" fill="#5a4c3d" stroke="#5a4c3d" stroke-width="0.55" font-family="DejaVu Sans,Liberation Sans,sans-serif">f</text></svg>
<span class="t" style="left:185.53px;top:358.90px;font-size:23.4px;letter-spacing:1.449px;color:#8b0a0a;">mApplicationContext</span>
<span class="t" style="left:441.08px;top:358.90px;font-size:23.4px;letter-spacing:0.000px;color:#2a2a2a;-webkit-text-stroke:0">=</span>
<span class="t" style="left:463.73px;top:358.90px;font-size:23.4px;letter-spacing:1.049px;color:#8f8f8f;">{UAMPApplication@4487}</span>
<svg style="left:118.79999999999995px;top:396.5899999999999px;" width="15" height="17" viewBox="0 0 15 17" ><path d="M0 0 L14.6 8.3 L0 16.6 Z" fill="#a3a3a3"/></svg>
<svg style="left:150.5999999999999px;top:387.9899999999999px;" width="32" height="32" viewBox="0 0 32 32" ><circle cx="16" cy="16" r="12.6" fill="url(#gf)" stroke="#eaa94f" stroke-width="1"/><text x="16.2" y="21.4" font-size="18" text-anchor="middle" fill="#5a4c3d" stroke="#5a4c3d" stroke-width="0.55" font-family="DejaVu Sans,Liberation Sans,sans-serif">f</text><ellipse cx="6" cy="5.3" rx="5.2" ry="3.4" transform="rotate(-32 6 5.3)" fill="#727272"/><path d="M6.5 7.5 L13 12.5 L9.8 5.6 Z" fill="#727272"/></svg>
<span class="t" style="left:185.53px;top:394.09px;font-size:23.4px;letter-spacing:1.515px;color:#8b0a0a;">mAudioFocusDispatcher</span>
<span class="t" style="left:478.58px;top:394.09px;font-size:23.4px;letter-spacing:0.000px;color:#2a2a2a;-webkit-text-stroke:0">=</span>
<span class="t" style="left:501.23px;top:394.09px;font-size:23.4px;letter-spacing:0.772px;color:#8f8f8f;">{AudioManager$1@4554}</span>
<svg style="left:118.79999999999995px;top:431.78px;" width="15" height="17" viewBox="0 0 15 17" ><path d="M0 0 L14.6 8.3 L0 16.6 Z" fill="#a3a3a3"/></svg>
<svg style="left:150.5999999999999px;top:423.17999999999995px;" width="32" height="32" viewBox="0 0 32 32" ><circle cx="16" cy="16" r="12.6" fill="url(#gf)" stroke="#eaa94f" stroke-width="1"/><text x="16.2" y="21.4" font-size="18" text-anchor="middle" fill="#5a4c3d" stroke="#5a4c3d" stroke-width="0.55" font-family="DejaVu Sans,Liberation Sans,sans-serif">f</text><ellipse cx="6" cy="5.3" rx="5.2" ry="3.4" transform="rotate(-32 6 5.3)" fill="#727272"/><path d="M6.5 7.5 L13 12.5 L9.8 5.6 Z" fill="#727272"/></svg>
<span class="t" style="left:185.53px;top:429.28px;font-size:23.4px;letter-spacing:1.158px;color:#8b0a0a;">mAudioFocusEventHandlerDelegate</span>
<span class="t" style="left:607.58px;top:429.28px;font-size:23.4px;letter-spacing:0.000px;color:#2a2a2a;-webkit-text-stroke:0">=</span>
<span class="t" style="left:630.23px;top:429.28px;font-size:23.4px;letter-spacing:0.772px;color:#8f8f8f;">{AudioManager$FocusEventHandlerDelegate@4555}</span>
<svg style="left:150.5999999999999px;top:458.37px;" width="32" height="32" viewBox="0 0 32 32" ><circle cx="16" cy="16" r="12.6" fill="url(#gf)" stroke="#eaa94f" stroke-width="1"/><text x="16.2" y="21.4" font-size="18" text-anchor="middle" fill="#5a4c3d" stroke="#5a4c3d" stroke-width="0.55" font-family="DejaVu Sans,Liberation Sans,sans-serif">f</text><ellipse cx="6" cy="5.3" rx="5.2" ry="3.4" transform="rotate(-32 6 5.3)" fill="#727272"/><path d="M6.5 7.5 L13 12.5 L9.8 5.6 Z" fill="#727272"/></svg>
<span class="t" style="left:185.53px;top:464.47px;font-size:23.4px;letter-spacing:1.423px;color:#8b0a0a;">mAudioFocusIdListenerMap</span>
<span class="t" style="left:515.08px;top:464.47px;font-size:23.4px;letter-spacing:0.000px;color:#2a2a2a;-webkit-text-stroke:0">=</span>
<span class="t" style="left:537.73px;top:464.47px;font-size:23.4px;letter-spacing:0.605px;color:#8f8f8f;">{HashMap@4556}</span>
<span class="t" style="left:756.75px;top:464.47px;font-size:23.4px;letter-spacing:1.758px;color:#111;">size</span>
<span class="t" style="left:810.58px;top:464.47px;font-size:23.4px;letter-spacing:0.000px;color:#111;">=</span>
<span class="t" style="left:836.40px;top:464.47px;font-size:23.4px;letter-spacing:0.000px;color:#111;">0</span>
</div>
<div style="left:1443.9px;top:149.6px;width:268.1px;height:448.4px;background:#fff;"></div>
<div style="left:1443.9px;top:598px;width:268.1px;height:1.5px;background:#cbcbcb;"></div>
<div style="left:1443.9px;top:599.5px;width:268.1px;height:46.5px;background:#ececec;"></div>
<div style="left:1711px;top:149.6px;width:1px;height:496.4px;background:#d8d8d8;"></div>
<span class="t" style="left:1508.01px;top:296.20px;font-size:23.4px;letter-spacing:1.394px;color:#8e8e8e;">No watches</span>
<svg style="left:1457px;top:613px;" width="20" height="18" viewBox="0 0 20 18" ><path d="M9.7 0 V18 M0.2 9 H19.2" stroke="#3c3c3c" stroke-width="3.3"/></svg>
<div style="left:1503.2px;top:619.6px;width:19.1px;height:4.6px;background:#9b9b9b;"></div>
<svg style="left:1548.8px;top:616.2px;" width="21" height="12" viewBox="0 0 21 12" ><path d="M0 11.6 L10.1 0 L20.2 11.6 Z" fill="#9b9b9b"/></svg>
<svg style="left:1595px;top:616.2px;" width="21" height="12" viewBox="0 0 21 12" ><path d="M0 0 H20.4 L10.2 11.6 Z" fill="#9b9b9b"/></svg>
<svg style="left:1638px;top:606px;" width="28" height="32" viewBox="0 0 28 32" ><path d="M8.6 4.6 V1.8 H19.6 L25.8 8 V25.6 H19" fill="none" stroke="#9d9d9d" stroke-width="2.7"/><path d="M19.4 2 V8.2 H25.6" fill="none" stroke="#a0a0a0" stroke-width="1.6"/><path d="M1.8 7.4 H11.6 L17.8 13.6 V29.8 H1.8 Z" fill="none" stroke="#9d9d9d" stroke-width="3"/><path d="M11.2 7.6 V14 H17.6" fill="none" stroke="#a0a0a0" stroke-width="1.6"/></svg>
<div style="left:0px;top:646px;width:1712px;height:1.4px;background:#c2c2c2;"></div>
<div style="left:0px;top:647.4px;width:1712px;height:36.8px;background:#ececec;"></div>
<div style="left:0px;top:684.5px;width:1712px;height:1.5px;background:#f3f3f3;"></div>
<div style="left:747px;top:647.4px;width:158.4px;height:37.1px;background:#bcbcbc;"></div>
<svg style="left:22px;top:655.5px;" width="23.0" height="23" viewBox="0 0 24 28" preserveAspectRatio="none"><g fill="#97c023"><path d="M5 9.5 A7 6.5 0 0 1 19 9.5 Z"/><rect x="5" y="10.5" width="14" height="11.5" rx="1.5"/><rect x="0.3" y="10.5" width="3.4" height="9.5" rx="1.7"/><rect x="20.3" y="10.5" width="3.4" height="9.5" rx="1.7"/><rect x="7.2" y="20" width="3.6" height="7.7" rx="1.7"/><rect x="13.2" y="20" width="3.6" height="7.7" rx="1.7"/></g><path d="M7.2 0.8 L9 4 M16.8 0.8 L15 4" stroke="#97c023" stroke-width="0.9" fill="none"/><circle cx="9" cy="6.5" r="0.9" fill="#fff" fill-opacity="0.55"/><circle cx="15" cy="6.5" r="0.9" fill="#fff" fill-opacity="0.55"/></svg>
<span class="t" style="left:51.79px;top:656.60px;font-size:20.1px;letter-spacing:1.245px;color:#1a1a1a;"><u>6</u>: Android Monitor</span>
<svg style="left:284.5px;top:655.5px;" width="24" height="23" viewBox="0 0 24 23" ><rect x="0" y="0" width="23.6" height="23" fill="#585858"/><rect x="0" y="0" width="23.6" height="4" fill="#939393"/><rect x="0.7" y="0.7" width="22.2" height="21.6" fill="none" stroke="#7a7a7a" stroke-width="1.4"/><path d="M4.5 9.5 L9 13 L4.5 16.5 M10.5 17.6 H17.5" fill="none" stroke="#fff" stroke-width="1.7"/></svg>
<span class="t" style="left:316.40px;top:656.60px;font-size:20.1px;letter-spacing:1.604px;color:#1a1a1a;">Terminal</span>
<svg style="left:444px;top:656px;" width="23" height="22" viewBox="0 0 23 22" ><rect x="0.8" y="0.8" width="21" height="20.4" fill="#efb65f" stroke="#f6d49b" stroke-width="1.6"/><path d="M4.5 6.5 H18 M4.5 9.8 H10 M12 9.8 H18 M4.5 13 H18 M4.5 16.2 H12 M14 16.2 H18" stroke="#9a8a70" stroke-width="1.3"/></svg>
<span class="t" style="left:473.79px;top:656.60px;font-size:20.1px;letter-spacing:0.805px;color:#1a1a1a;"><u>0</u>: Messages</span>
<svg style="left:638.5px;top:655px;" width="24" height="25" viewBox="0 0 24 25" ><path d="M0.2 0.3 L20.5 12 L0.2 24.2 Z" fill="#2fa84a"/><circle cx="17.9" cy="20.5" r="4" fill="#3aa63a" stroke="#2c8a2c" stroke-width="0.8"/></svg>
<span class="t" style="left:666.90px;top:656.60px;font-size:20.1px;letter-spacing:1.205px;color:#1a1a1a;"><u>4</u>: Run</span>
<svg style="left:766px;top:654px;" width="28" height="27" viewBox="0 0 28 27" ><path d="M3 3 Q6 3.5 8 7 M13 3 Q11 3.5 10 7 M17 2.5 Q14 4 13.5 7 M3 24 Q6 23.5 8 20 M13 24.5 Q11 23 10 20" fill="none" stroke="#7a7a7a" stroke-width="1.1"/><rect x="17" y="6.5" width="7" height="11.5" rx="3" fill="#b9b9b9" stroke="#8a8a8a" stroke-width="0.8"/><path d="M24 8 h2.5 M24 10.5 h2.5 M24 13 h2.5 M24 15.5 h2.5" stroke="#8a8a8a" stroke-width="1"/><ellipse cx="10.6" cy="13" rx="9.2" ry="9.8" fill="#3db24f"/><path d="M1.6 12.6 H19.4" stroke="#2c8f3c" stroke-width="1.2"/><circle cx="22.3" cy="21.9" r="4" fill="#3aa63a" stroke="#2c8a2c" stroke-width="0.8"/></svg>
<span class="t" style="left:797.49px;top:656.60px;font-size:20.1px;letter-spacing:1.015px;color:#1a1a1a;"><u>5</u>: Debug</span>
<svg style="left:923px;top:654px;" width="27" height="26" viewBox="0 0 27 26" ><path d="M7 24.8 Q13.5 18.5 20.5 24.8 Z" fill="#3b8fd0"/><ellipse cx="15.2" cy="14.6" rx="7.6" ry="8.2" fill="#f0b263"/><path d="M7.6 12 Q8 3.6 16.5 4 Q24 4.6 22.8 13 Q19 8.6 12.6 9.8 Q9 10.4 7.6 12 Z" fill="#747474"/><path d="M11 15.2 h2.6 M16.6 15.2 h2.6" stroke="#5b4630" stroke-width="1.4"/><ellipse cx="7.4" cy="6.8" rx="6" ry="5.2" fill="#fff" stroke="#8b8b8b" stroke-width="1"/><path d="M4.4 4.8 H10.4 M4.4 6.8 H10.4 M4.4 8.8 H10.4" stroke="#6b6b6b" stroke-width="1"/></svg>
<span class="t" style="left:956.90px;top:656.60px;font-size:20.1px;letter-spacing:2.113px;color:#1a1a1a;">TODO</span>
<svg style="left:1329px;top:655px;" width="34" height="24" viewBox="0 0 34 24" ><path d="M3.5 0.3 H19.5 Q23 0.3 23 3.8 V13.2 Q23 16.8 19.5 16.8 H19 L18.6 22 L13.2 16.8 H3.5 Q0 16.8 0 13.2 V3.8 Q0 0.3 3.5 0.3 Z" fill="#7dcd84"/><path d="M11.6 2.6 V10.4 M11.6 12.4 V14.6" stroke="#3b5f3f" stroke-width="2.6"/></svg>
<span class="t" style="left:1353px;top:663.44px;font-size:16.5px;color:#1a1a1a;font-weight:bold">2</span>
<span class="t" style="left:1371.59px;top:656.60px;font-size:20.1px;letter-spacing:0.946px;color:#1a1a1a;">Event Log</span>
<svg style="left:1511.8px;top:657px;" width="22.4" height="20.8" viewBox="0 0 22.4 20.8" ><rect x="0.6" y="0.6" width="21.2" height="19.6" fill="#a3d0ef" stroke="#777" stroke-width="1.2"/><rect x="0" y="0" width="22.4" height="3" fill="#4a8fc6"/><path d="M5.4 7 H16.4 M5.4 9.8 H12.6 M5.4 12.6 H12.6 M5.4 15.4 H12.6" stroke="#56748a" stroke-width="1.4"/></svg>
<span class="t" style="left:1542.29px;top:656.60px;font-size:20.1px;letter-spacing:1.102px;color:#1a1a1a;">Gradle Console</span>
</body></html>
